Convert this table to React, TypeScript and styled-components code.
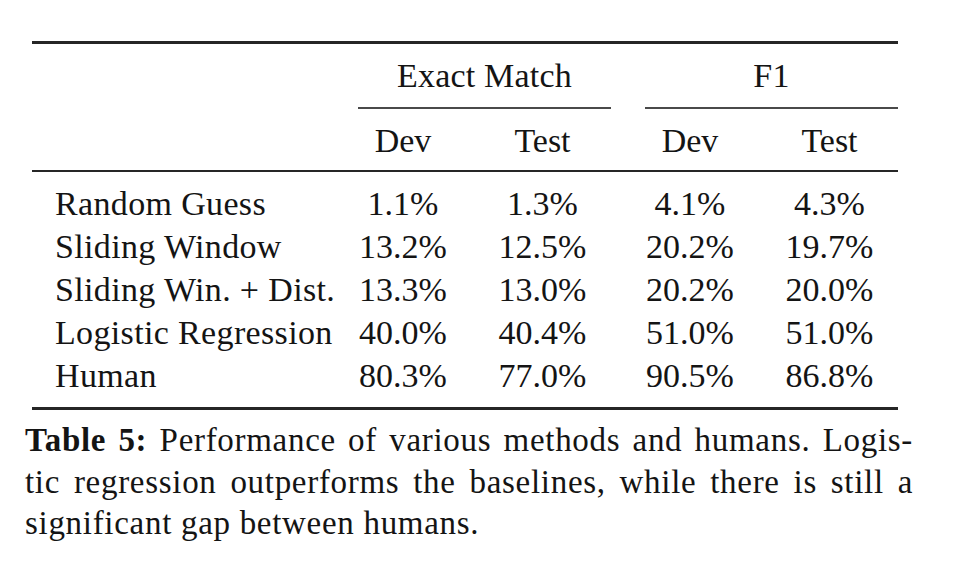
import styled, { createGlobalStyle } from 'styled-components'

const GlobalStyle = createGlobalStyle`
  html, body {
    margin: 0;
    padding: 0;
    background: #fff;
  }
  body {
    font-family: "Liberation Serif", "Times New Roman", serif;
    color: #141414;
  }
`

const groups = ['Exact Match', 'F1']
const subHeads = ['Dev', 'Test', 'Dev', 'Test']

const rows = [
	{ name: 'Random Guess', values: ['1.1%', '1.3%', '4.1%', '4.3%'] },
	{ name: 'Sliding Window', values: ['13.2%', '12.5%', '20.2%', '19.7%'] },
	{ name: 'Sliding Win. + Dist.', values: ['13.3%', '13.0%', '20.2%', '20.0%'] },
	{ name: 'Logistic Regression', values: ['40.0%', '40.4%', '51.0%', '51.0%'] },
	{ name: 'Human', values: ['80.3%', '77.0%', '90.5%', '86.8%'] },
]

const App = () => {

	return (
		<Page>
			<GlobalStyle />
			<Table>
				<Rule $weight={3} />
				<GroupRow>
					<span />
					{groups.map((group) => (
						<Group key={group}>
							<GroupLabel>{group}</GroupLabel>
							<CmidRule />
						</Group>
					))}
				</GroupRow>
				<Row $head>
					<span />
					{subHeads.map((head, index) => (
						<Cell key={index}>{head}</Cell>
					))}
				</Row>
				<Rule $weight={2} />
				<Body>
					{rows.map(({ name, values }) => (
						<Row key={name}>
							<Label>{name}</Label>
							{values.map((value, index) => (
								<Cell key={index}>{value}</Cell>
							))}
						</Row>
					))}
				</Body>
				<Rule $weight={3} />
			</Table>
			<Caption>
				<CaptionLine $justify>
					<b>Table 5:</b> Performance of various methods and humans. Logis-
				</CaptionLine>
				<CaptionLine $justify>
					tic regression outperforms the baselines, while there is still a
				</CaptionLine>
				<CaptionLine>significant gap between humans.</CaptionLine>
			</Caption>
		</Page>
	)
}


const Page = styled.div`
  width: 953px;
  height: 579px;
  padding: 41px 0 0;
  box-sizing: border-box;
  overflow: hidden;
`

const Table = styled.div`
  width: 866px;
  margin-left: 32px;
  font-size: 34px;
  line-height: 43px;
`

const Rule = styled.div<{ $weight: number }>`
  height: ${(props) => props.$weight}px;
  background: #262626;
`

const GroupRow = styled.div`
  display: grid;
  grid-template-columns: 326px 287px 253px;
  padding: 10px 0 10px;

  & > :nth-child(2) {
    margin-right: 34px;
  }
`

const Group = styled.div`
  display: flex;
  flex-direction: column;
  align-items: center;
`

const GroupLabel = styled.div`
  height: 43px;
  letter-spacing: 0.2px;
`

const CmidRule = styled.div`
  width: 100%;
  height: 2px;
  margin-top: 10px;
  background: #4a4a4a;
`

const Row = styled.div<{ $head?: boolean }>`
  display: grid;
  grid-template-columns: 326px 116px 171px 116px 137px;
  height: 43px;
  padding-bottom: ${(props) => (props.$head ? '8px' : '0')};

  & > :nth-child(2),
  & > :nth-child(4) {
    padding-right: 26px;
  }

  & > :nth-child(3) {
    padding-right: 34px;
  }
`

const Body = styled.div`
  padding: 10px 0 10px;
`

const Label = styled.div`
  padding-left: 23px;
  white-space: nowrap;
  letter-spacing: 0.35px;
`

const Cell = styled.div`
  text-align: center;
  white-space: nowrap;
`

const Caption = styled.div`
  width: 888px;
  margin: 10px 0 0 25px;
  font-size: 33px;
  line-height: 41.5px;
  letter-spacing: 0.7px;

  b {
    font-weight: 700;
  }
`

const CaptionLine = styled.div<{ $justify?: boolean }>`
  white-space: nowrap;
  text-align: ${(props) => (props.$justify ? 'justify' : 'left')};
  text-align-last: ${(props) => (props.$justify ? 'justify' : 'left')};
`


export default App
